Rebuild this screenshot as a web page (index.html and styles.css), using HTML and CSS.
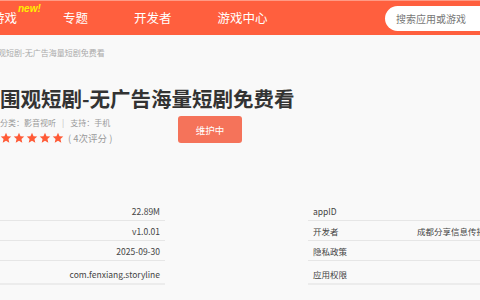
FILE: index.html
```html
<!DOCTYPE html>
<html lang="zh-CN">
<head>
<meta charset="utf-8">
<title>围观短剧</title>
<link rel="stylesheet" href="styles.css">
</head>
<body>
<header class="topbar">
  <nav class="nav">
    <a class="nav-item nav-new">游戏<span class="badge-new">new!</span></a>
    <a class="nav-item">专题</a>
    <a class="nav-item">开发者</a>
    <a class="nav-item">游戏中心</a>
  </nav>
  <div class="search">搜索应用或游戏</div>
</header>
<main class="main">
  <div class="crumb">围观短剧-无广告海量短剧免费看</div>
  <h1 class="title">围观短剧-无广告海量短剧免费看</h1>
  <div class="info-row">
    <div class="info-col">
      <div class="meta"><span>分类：影音视听</span><span class="sep">|</span><span>支持：手机</span></div>
      <div class="rating">
        <span class="stars">
          <svg viewBox="0 0 24 24" class="star"><path d="M12 1.5l3.1 6.9 7.4.7-5.6 5 1.7 7.4L12 17.6l-6.6 3.9 1.7-7.4-5.6-5 7.4-.7z"/></svg>
          <svg viewBox="0 0 24 24" class="star"><path d="M12 1.5l3.1 6.9 7.4.7-5.6 5 1.7 7.4L12 17.6l-6.6 3.9 1.7-7.4-5.6-5 7.4-.7z"/></svg>
          <svg viewBox="0 0 24 24" class="star"><path d="M12 1.5l3.1 6.9 7.4.7-5.6 5 1.7 7.4L12 17.6l-6.6 3.9 1.7-7.4-5.6-5 7.4-.7z"/></svg>
          <svg viewBox="0 0 24 24" class="star"><path d="M12 1.5l3.1 6.9 7.4.7-5.6 5 1.7 7.4L12 17.6l-6.6 3.9 1.7-7.4-5.6-5 7.4-.7z"/></svg>
          <svg viewBox="0 0 24 24" class="star"><path d="M12 1.5l3.1 6.9 7.4.7-5.6 5 1.7 7.4L12 17.6l-6.6 3.9 1.7-7.4-5.6-5 7.4-.7z"/></svg>
        </span>
        <span class="count">( 4次评分 )</span>
      </div>
    </div>
    <button class="btn">维护中</button>
  </div>
  <section class="tables">
    <div class="table table-left">
      <div class="row"><span class="val">22.89M</span></div>
      <div class="row"><span class="val">v1.0.01</span></div>
      <div class="row"><span class="val">2025-09-30</span></div>
      <div class="row row-last"><span class="val">com.fenxiang.storyline</span></div>
    </div>
    <div class="table table-right">
      <div class="row"><span class="label">appID</span><span class="rval"></span></div>
      <div class="row"><span class="label">开发者</span><span class="rval">成都分享信息传播有限公司</span></div>
      <div class="row"><span class="label">隐私政策</span><span class="rval"></span></div>
      <div class="row row-last"><span class="label">应用权限</span><span class="rval"></span></div>
    </div>
  </section>
</main>
</body>
</html>
```
FILE: styles.css
```css
* { box-sizing: border-box; }
html, body { margin: 0; padding: 0; }
body {
  width: 480px;
  height: 300px;
  overflow: hidden;
  background: #f9f9f9;
  font-family: "Noto Sans CJK SC", "Noto Sans", sans-serif;
  color: #333;
}
.topbar {
  height: 35px;
  background: #ff5f3e;
  border-top: 1px solid #ff9a85;
  display: flex;
  align-items: center;
  overflow: hidden;
}
.nav {
  display: flex;
  gap: 46px;
  margin-left: -8px;
}
.nav-item {
  color: #fff;
  font-size: 12.5px;
  line-height: 18px;
  position: relative;
  white-space: nowrap;
}
.badge-new {
  position: absolute;
  left: 26px;
  top: -6px;
  color: #ffee00;
  font-family: "Liberation Sans", sans-serif;
  font-style: italic;
  font-weight: bold;
  font-size: 10px;
  line-height: 12px;
}
.search {
  margin-left: auto;
  margin-right: -60px;
  width: 155px;
  height: 25px;
  flex: none;
  background: #fff;
  border-radius: 13px;
  font-size: 10px;
  line-height: 25px;
  color: #777;
  padding-left: 11px;
}
.main { padding: 0; }
.crumb {
  margin: 12px 0 0 -10px;
  font-size: 8px;
  line-height: 12px;
  color: #aaa;
  white-space: nowrap;
}
.title {
  margin: 25px 0 0 0;
  font-size: 20.5px;
  line-height: 28px;
  font-weight: bold;
  color: #333;
  white-space: nowrap;
}
.info-row {
  display: flex;
  align-items: flex-start;
  margin-top: 4px;
}
.info-col { width: 178px; padding-top: 1px; }
.meta {
  font-size: 8px;
  line-height: 12px;
  color: #999;
  white-space: nowrap;
}
.sep { margin: 0 6px; color: #bbb; }
.rating {
  display: flex;
  align-items: center;
  margin-top: 2px;
  height: 14px;
}
.stars { display: flex; gap: 1px; }
.star { width: 12px; height: 12px; fill: #ff5a36; display: block; }
.count {
  margin-left: 4px;
  font-size: 9.5px;
  color: #999;
  white-space: nowrap;
}
.btn {
  width: 64px;
  height: 27px;
  border: none;
  border-radius: 3px;
  background: #f5735a;
  color: #fff;
  font-family: inherit;
  font-size: 9.5px;
  padding: 0;
}
.tables {
  display: flex;
  margin-top: 56px;
}
.table-left { width: 165px; flex: none; }
.table-right { margin-left: 143px; width: 260px; flex: none; }
.row {
  height: 20px;
  display: flex;
  align-items: center;
  border-bottom: 1px solid #e6e6e6;
  font-size: 8.5px;
  color: #444;
  white-space: nowrap;
}
.row-last {
  height: 24px;
  padding-top: 4px;
  border-bottom: 2px solid #ececec;
}
.table-left .row { justify-content: flex-end; padding-right: 5px; }
.label { width: 109px; padding-left: 5px; flex: none; }
.rval { color: #444; }
```
